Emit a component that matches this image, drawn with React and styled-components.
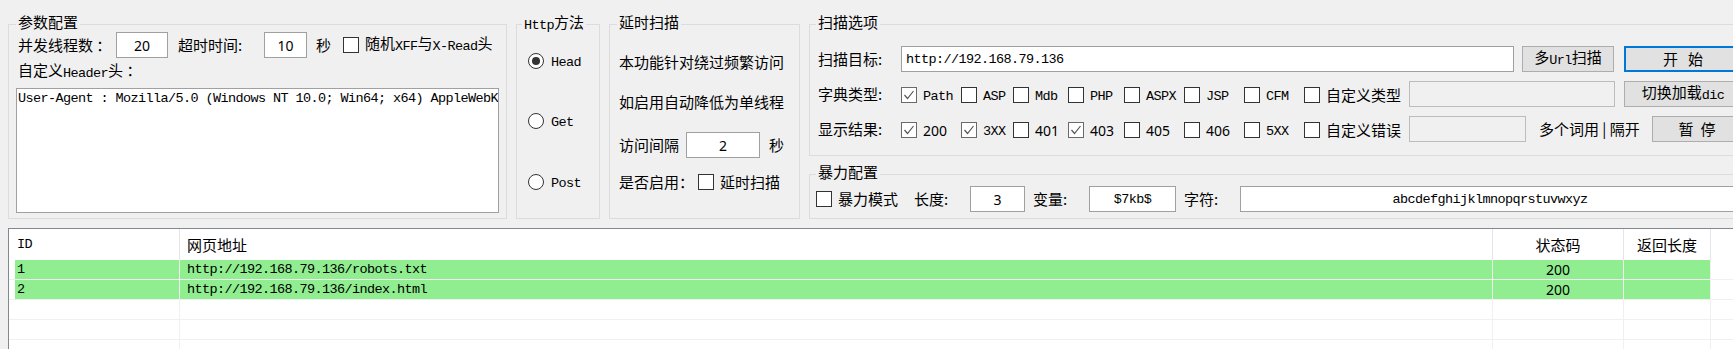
import React from 'react';
import styled, { createGlobalStyle } from 'styled-components';

const GlobalStyle = createGlobalStyle`
  * { box-sizing: border-box; }
  html, body {
    margin: 0;
    padding: 0;
    background: #f0f0f0;
  }
  body {
    width: 1733px;
    height: 349px;
    overflow: hidden;
    font-family: "Noto Sans CJK SC", "Noto Sans", sans-serif;
    font-size: 15px;
    color: #000;
  }
`;

const MONO = '"Liberation Mono", "Noto Sans CJK SC", monospace';

const Page = styled.div`
  width: 1733px;
  height: 349px;
  overflow: hidden;
`;

const TopPanel = styled.div`
  display: flex;
  gap: 9px;
  height: 219px;
  padding: 24px 0 0 8px;
`;

const Column = styled.div`
  flex: none;
  display: flex;
  flex-direction: column;
  gap: 18px;
`;

const Group = styled.div`
  flex: none;
  display: flex;
  flex-direction: column;
  width: ${(p) => p.$w}px;
  height: ${(p) => (p.$h ? `${p.$h}px` : 'auto')};
  padding: 0 ${(p) => p.$pr ?? 0}px 0 ${(p) => p.$pl ?? 0}px;
  border: 1px solid #dcdcdc;
`;

const Title = styled.div`
  align-self: flex-start;
  height: 18px;
  margin: -12px 0 0 ${(p) => p.$ml ?? 0}px;
  padding: 0 2px;
  background: #f0f0f0;
  line-height: 18px;
  white-space: nowrap;
`;

const Row = styled.div`
  flex: none;
  display: flex;
  align-items: center;
  height: ${(p) => p.$h ?? 26}px;
  margin-top: ${(p) => p.$mt ?? 0}px;
  margin-left: ${(p) => p.$ml ?? 0}px;
`;

const Text = styled.span`
  flex: none;
  width: ${(p) => (p.$w ? `${p.$w}px` : 'auto')};
  margin-left: ${(p) => p.$ml ?? 0}px;
  line-height: 20px;
  white-space: nowrap;
`;

const Mono = styled.span`
  font-family: ${MONO};
  font-size: 13.5px;
  letter-spacing: -0.6px;
  vertical-align: -1px;
`;

const Num = styled.span`
  font-family: "Noto Sans", sans-serif;
  font-size: 14px;
`;

const Input = styled.input`
  flex: none;
  width: ${(p) => p.$w}px;
  height: 26px;
  margin: 0 0 0 ${(p) => p.$ml ?? 0}px;
  padding: 0 ${(p) => (p.$center ? 0 : 4)}px;
  border: 1px solid ${(p) => (p.$off ? '#bcbcbc' : '#a0a0a0')};
  border-radius: 0;
  background: ${(p) => (p.$off ? '#f0f0f0' : '#fff')};
  color: #000;
  outline: none;
  text-align: ${(p) => (p.$center ? 'center' : 'left')};
  font-family: ${(p) => (p.$mono ? MONO : '"Noto Sans", sans-serif')};
  font-size: ${(p) => (p.$mono ? '13.5px' : '14px')};
  letter-spacing: ${(p) => (p.$mono ? '-0.6px' : 'normal')};
`;

const TextArea = styled.textarea`
  flex: none;
  width: 100%;
  height: 125px;
  margin: 6px 0 0;
  padding: 1px 1px;
  border: 1px solid #a0a0a0;
  border-radius: 0;
  background: #fff;
  resize: none;
  overflow: hidden;
  outline: none;
  font-family: ${MONO};
  font-size: 13.5px;
  letter-spacing: -0.6px;
  line-height: 18px;
  color: #000;
`;

const Button = styled.button`
  flex: none;
  display: flex;
  align-items: center;
  justify-content: center;
  gap: ${(p) => p.$gap ?? 0}px;
  width: ${(p) => p.$w}px;
  height: 26px;
  margin-left: ${(p) => p.$ml ?? 0}px;
  padding: 0;
  border: ${(p) => (p.$primary ? '2px solid #0078d7' : '1px solid #adadad')};
  border-radius: 0;
  background: #e1e1e1;
  color: #000;
  font-family: inherit;
  font-size: 15px;
  line-height: 20px;
  white-space: nowrap;
`;

const Box = styled.span`
  flex: none;
  display: flex;
  align-items: center;
  justify-content: center;
  width: 16px;
  height: 16px;
  border: 1px solid ${(p) => (p.$on ? '#6a6a6a' : '#333')};
  background: #fff;
`;

const Circle = styled.span`
  flex: none;
  display: flex;
  align-items: center;
  justify-content: center;
  width: 16px;
  height: 16px;
  border: 1px solid #333;
  border-radius: 50%;
  background: #fff;
  &::after {
    content: '';
    width: 8px;
    height: 8px;
    border-radius: 50%;
    background: ${(p) => (p.$on ? '#333' : 'transparent')};
  }
`;

const CheckItem = styled.label`
  flex: none;
  display: flex;
  align-items: center;
  gap: 6px;
  width: ${(p) => p.$w}px;
  margin-top: 2px;
  line-height: 20px;
`;

const Check = ({ on }) => (
  <Box $on={on}>
    {on && (
      <svg width="12" height="12" viewBox="0 0 12 12">
        <path d="M1.5 6 L4.5 9.5 L10.5 2" fill="none" stroke="#555" strokeWidth="1.2" />
      </svg>
    )}
  </Box>
);

const Table = styled.div`
  width: 1740px;
  height: 140px;
  margin: 9px 0 0 8px;
  border: 1px solid #828790;
  background: #fff;
`;

const HeadRow = styled.div`
  display: flex;
  height: 31px;
`;

const HeadCell = styled.div`
  flex: none;
  display: flex;
  align-items: center;
  justify-content: ${(p) => (p.$center ? 'center' : 'flex-start')};
  width: ${(p) => (p.$w ? `${p.$w}px` : 'auto')};
  padding-left: ${(p) => p.$pl ?? 0}px;
  border-right: 1px solid #e5e5e5;
  white-space: nowrap;
`;

const BodyRow = styled.div`
  display: flex;
  height: 20px;
  padding-left: 6px;
  border-bottom: 1px solid #f0f0f0;
`;

const Cell = styled.div`
  flex: none;
  display: flex;
  align-items: center;
  justify-content: ${(p) => (p.$center ? 'center' : 'flex-start')};
  width: ${(p) => p.$w}px;
  padding-left: ${(p) => p.$pl ?? 0}px;
  border-right: 1px solid #f0f0f0;
  background: ${(p) => (p.$hit ? '#90ee90' : 'transparent')};
  white-space: nowrap;
`;

const colWidths = [165, 1313, 131, 87];

const dictTypes = [
  { label: 'Path', w: 60, on: true, mono: true },
  { label: 'ASP', w: 52, mono: true },
  { label: 'Mdb', w: 55, mono: true },
  { label: 'PHP', w: 56, mono: true },
  { label: 'ASPX', w: 60, mono: true },
  { label: 'JSP', w: 60, mono: true },
  { label: 'CFM', w: 60, mono: true },
];

const codes = [
  { label: '200', w: 60, on: true },
  { label: '3XX', w: 52, on: true, mono: true },
  { label: '401', w: 55 },
  { label: '403', w: 56, on: true },
  { label: '405', w: 60 },
  { label: '406', w: 60 },
  { label: '5XX', w: 60, mono: true },
];

const results = [
  { id: '1', url: 'http://192.168.79.136/robots.txt', code: '200' },
  { id: '2', url: 'http://192.168.79.136/index.html', code: '200' },
  null,
  null,
  null,
];

const Options = ({ items }) =>
  items.map((it) => (
    <CheckItem key={it.label} $w={it.w}>
      <Check on={it.on} />
      <span>{it.mono ? <Mono>{it.label}</Mono> : <Num>{it.label}</Num>}</span>
    </CheckItem>
  ));

const App = () => {
  return (
    <Page>
      <GlobalStyle />
      <TopPanel>
        <Group $w={499} $pl={7} $pr={7}>
          <Title>参数配置</Title>
          <Row $mt={1} $ml={2}>
            <Text $w={98}>并发线程数 ：</Text>
            <Input $w={52} $center readOnly value="20" />
            <Text $w={86} $ml={10}>超时时间:</Text>
            <Input $w={43} $center readOnly value="10" />
            <Text $w={27} $ml={9}>秒</Text>
            <Check />
            <Text $ml={6}>
              随机<Mono>XFF</Mono>与<Mono>X-Read</Mono>头
            </Text>
          </Row>
          <Row $h={20} $mt={4} $ml={2}>
            <Text>
              自定义<Mono>Header</Mono>头 ：
            </Text>
          </Row>
          <TextArea
            readOnly
            wrap="off"
            value="User-Agent : Mozilla/5.0 (Windows NT 10.0; Win64; x64) AppleWebKit/537.36 (KHTML, like Gecko)"
          />
        </Group>

        <Group $w={84}>
          <Title $ml={5}>
            <Mono>Http</Mono>方法
          </Title>
          <Row $h={20} $mt={20} $ml={11}>
            <Circle $on />
            <Text $ml={7}><Mono>Head</Mono></Text>
          </Row>
          <Row $h={20} $mt={40} $ml={11}>
            <Circle />
            <Text $ml={7}><Mono>Get</Mono></Text>
          </Row>
          <Row $h={20} $mt={41} $ml={11}>
            <Circle />
            <Text $ml={7}><Mono>Post</Mono></Text>
          </Row>
        </Group>

        <Group $w={191} $pl={9}>
          <Title $ml={-2}>延时扫描</Title>
          <Row $h={20} $mt={21}>
            <Text>本功能针对绕过频繁访问</Text>
          </Row>
          <Row $h={20} $mt={20}>
            <Text>如启用自动降低为单线程</Text>
          </Row>
          <Row $mt={20}>
            <Text $w={67}>访问间隔</Text>
            <Input $w={74} $center readOnly value="2" />
            <Text $ml={9}>秒</Text>
          </Row>
          <Row $h={20} $mt={14}>
            <Text $w={79}>是否启用：</Text>
            <Check />
            <Text $ml={6}>延时扫描</Text>
          </Row>
        </Group>

        <Column>
          <Group $w={940} $h={132} $pl={8}>
            <Title $ml={-2}>扫描选项</Title>
            <Row $mt={15}>
              <Text $w={83}>扫描目标:</Text>
              <Input $w={613} $mono readOnly value="http://192.168.79.136" />
              <Button $w={92} $ml={8}>
                <span>多<Mono>Url</Mono>扫描</span>
              </Button>
              <Button $w={118} $ml={10} $primary $gap={10}>
                <span>开</span>
                <span>始</span>
              </Button>
            </Row>
            <Row $mt={9}>
              <Text $w={83}>字典类型:</Text>
              <Options items={dictTypes} />
              <CheckItem $w={105}>
                <Check />
                <span>自定义类型</span>
              </CheckItem>
              <Input $w={206} $off readOnly value="" />
              <Button $w={118} $ml={9}>
                <span>切换加载<Mono>dic</Mono></span>
              </Button>
            </Row>
            <Row $mt={9}>
              <Text $w={83}>显示结果:</Text>
              <Options items={codes} />
              <CheckItem $w={105}>
                <Check />
                <span>自定义错误</span>
              </CheckItem>
              <Input $w={117} $off readOnly value="" />
              <Text $w={113} $ml={13}>多个词用 | 隔开</Text>
              <Button $w={90} $gap={7}>
                <span>暂</span>
                <span>停</span>
              </Button>
            </Row>
          </Group>

          <Group $w={940} $h={45} $pl={6}>
            <Title>暴力配置</Title>
            <Row $mt={5}>
              <Check />
              <Text $w={76} $ml={6}>暴力模式</Text>
              <Text $w={56}>长度:</Text>
              <Input $w={55} $center readOnly value="3" />
              <Text $w={56} $ml={8}>变量:</Text>
              <Input $w={87} $center $mono readOnly value="$7kb$" />
              <Text $w={56} $ml={8}>字符:</Text>
              <Input $w={500} $center $mono readOnly value="abcdefghijklmnopqrstuvwxyz" />
            </Row>
          </Group>
        </Column>
      </TopPanel>

      <Table>
        <HeadRow>
          <HeadCell $w={171} $pl={8}><Mono>ID</Mono></HeadCell>
          <HeadCell $w={1313} $pl={7}>网页地址</HeadCell>
          <HeadCell $w={131} $center>状态码</HeadCell>
          <HeadCell $w={87} $center>返回长度</HeadCell>
        </HeadRow>
        {results.map((r, i) => (
          <BodyRow key={i}>
            <Cell $w={colWidths[0]} $pl={2} $hit={!!r}>
              {r && <Mono>{r.id}</Mono>}
            </Cell>
            <Cell $w={colWidths[1]} $pl={7} $hit={!!r}>
              {r && <Mono>{r.url}</Mono>}
            </Cell>
            <Cell $w={colWidths[2]} $center $hit={!!r}>
              {r && <Num>{r.code}</Num>}
            </Cell>
            <Cell $w={colWidths[3]} $hit={!!r} />
          </BodyRow>
        ))}
      </Table>
    </Page>
  );
};

export default App;
